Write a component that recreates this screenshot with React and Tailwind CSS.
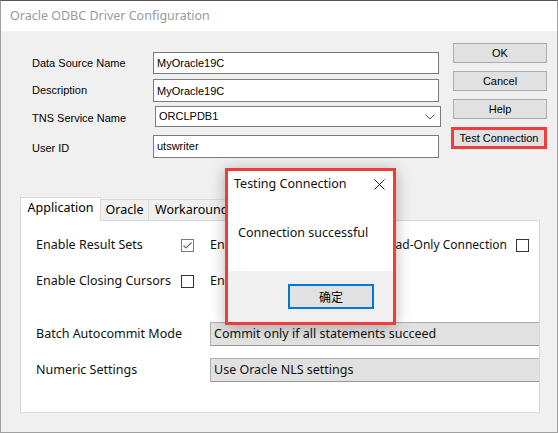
const ui = "font-['Noto_Sans',sans-serif] text-[12.5px]"
const classic = "font-['Liberation_Sans',Arial,sans-serif] text-[11px]"

function TextBox({ value, className = '' }) {
  return (
    <div
      className={`flex h-full w-[286px] items-start border border-[#7a7a7a] bg-white pl-[3px] pt-[3px] leading-[14px] ${className}`}
    >
      {value}
    </div>
  )
}

function Field({ label, children, className = '', labelClass = '' }) {
  return (
    <div className={`flex items-center ${className}`}>
      <span className={`w-[121px] ${labelClass}`}>{label}</span>
      {children}
    </div>
  )
}

function Button({ children }) {
  return (
    <div className="flex h-[20px] w-[94px] items-center justify-center border border-[#adadad] bg-[#e1e1e1]">
      {children}
    </div>
  )
}

function Checkbox({ checked }) {
  return (
    <span
      className={`flex h-[13px] w-[13px] shrink-0 items-center justify-center border bg-white ${
        checked ? 'border-[#7a7a7a]' : 'border-[#333]'
      }`}
    >
      {checked && (
        <svg width="11" height="11" viewBox="0 0 11 11">
          <polyline points="1.5,5.5 4,8 9.5,2.5" fill="none" stroke="#6a6a6a" strokeWidth="1.2" />
        </svg>
      )}
    </span>
  )
}

function SelectBox({ value }) {
  return (
    <div className="flex h-[24px] flex-1 items-center border border-r-0 border-[#b0b0b0] border-b-[#9a9a9a] bg-[#e1e1e1] pl-[3px]">
      {value}
    </div>
  )
}

function TestingDialog() {
  return (
    <div className="absolute left-[224px] top-[167px] flex h-[157px] w-[171px] flex-col border-[3px] border-[#f23c3c] bg-white shadow-[0_2px_14px_rgba(0,0,0,0.28)]">
      <div className={`flex h-[26px] items-center justify-between pl-[6px] pr-[8px] ${ui} text-[#111]`}>
        <span>Testing Connection</span>
        <svg width="11" height="11" viewBox="0 0 11 11">
          <path d="M0.5 0.5 L10.5 10.5 M10.5 0.5 L0.5 10.5" stroke="#222" strokeWidth="1" />
        </svg>
      </div>
      <div className={`h-[74px] pl-[10px] pt-[28px] ${ui} leading-[16px] text-[#111]`}>
        Connection successful
      </div>
      <div className="flex flex-1 justify-end bg-[#f0f0f0] pr-[19px] pt-[13px]">
        <div className="flex h-[25px] w-[86px] items-center justify-center border-2 border-[#0078d7] bg-[#e1e1e1] font-['Noto_Sans_CJK_SC',sans-serif] text-[12px]">
          确定
        </div>
      </div>
    </div>
  )
}

export default function App() {
  return (
    <div className="relative h-[433px] w-[558px] overflow-hidden border border-[#a0a0a0] border-t-[#555] bg-[#f0f0f0] text-black">
      <div className="flex h-[30px] items-center bg-white pl-[9px] font-['Noto_Sans',sans-serif] text-[12.5px] text-[#9a9a9a]">
        Oracle ODBC Driver Configuration
      </div>

      <div className={`flex ${classic}`}>
        <div className="flex flex-col pl-[31px] pt-[21px]">
          <Field label="Data Source Name" className="h-[22px]">
            <TextBox value="MyOracle19C" />
          </Field>
          <Field label="Description" className="mt-[5px] h-[23px]">
            <TextBox value="MyOracle19C" className="pt-[4px]" />
          </Field>
          <Field label="TNS Service Name" className="mt-[4px] h-[21px]" labelClass="pt-[3px]">
            <div className="-mr-[2px] ml-[2px] flex h-full w-[286px] items-center justify-between border border-[#7a7a7a] bg-white pl-[3px] pr-[5px]">
              <span>ORCLPDB1</span>
              <svg width="10" height="6" viewBox="0 0 10 6">
                <polyline points="0.5,0.5 5,5 9.5,0.5" fill="none" stroke="#555" strokeWidth="1" />
              </svg>
            </div>
          </Field>
          <Field label="User ID" className="mt-[8px] h-[23px]" labelClass="pt-[3px]">
            <TextBox value="utswriter" className="pt-[2px]" />
          </Field>
        </div>

        <div className="ml-[14px] flex flex-col gap-[8px] pt-[12px]">
          <Button>OK</Button>
          <Button>Cancel</Button>
          <Button>Help</Button>
          <div className="-ml-[2px] flex h-[22px] w-[96px] items-center justify-center border-[3px] border-[#f23c3c] bg-[#e1e1e1]">
            Test Connection
          </div>
        </div>
      </div>

      <div className={`ml-[19px] mt-[39px] ${ui}`}>
        <div className="flex h-[23px] items-end">
          <div className="relative z-10 -mb-px flex h-[24px] w-[81px] items-center justify-center border border-b-0 border-[#d9d9d9] bg-white pb-[2px]">
            Application
          </div>
          <div className="flex h-[21px] w-[48px] items-center justify-center border-r border-t border-[#d9d9d9] bg-[#f0f0f0]">
            Oracle
          </div>
          <div className="flex h-[21px] items-center border-r border-t border-[#d9d9d9] bg-[#f0f0f0] px-[6px]">
            Workarounds
          </div>
          <div className="flex h-[21px] items-center border-r border-t border-[#d9d9d9] bg-[#f0f0f0] px-[6px]">
            SQLServer Migration
          </div>
        </div>

        <div className="h-[193px] w-[520px] border border-[#d9d9d9] bg-white pt-[12px] text-[#111]">
          <div className="flex h-[24px] items-center pl-[15px] pr-[10px]">
            <span className="w-[145px]">Enable Result Sets</span>
            <Checkbox checked />
            <span className="ml-[16px] w-[140px]">Enable Query Timeout</span>
            <Checkbox checked />
            <span className="ml-auto mr-[9px] text-[12px]">Read-Only Connection</span>
            <Checkbox />
          </div>
          <div className="mt-[12px] flex h-[24px] items-center pl-[15px]">
            <span className="w-[145px]">Enable Closing Cursors</span>
            <Checkbox />
            <span className="ml-[16px] w-[140px]">Enable Thread Safety</span>
            <Checkbox checked />
          </div>
          <div className="mt-[29px] flex h-[24px] items-center pl-[15px]">
            <span className="w-[174px]">Batch Autocommit Mode</span>
            <SelectBox value="Commit only if all statements succeed" />
          </div>
          <div className="mt-[12px] flex h-[24px] items-center pl-[15px]">
            <span className="w-[174px]">Numeric Settings</span>
            <SelectBox value="Use Oracle NLS settings" />
          </div>
        </div>
      </div>

      <TestingDialog />
    </div>
  )
}
